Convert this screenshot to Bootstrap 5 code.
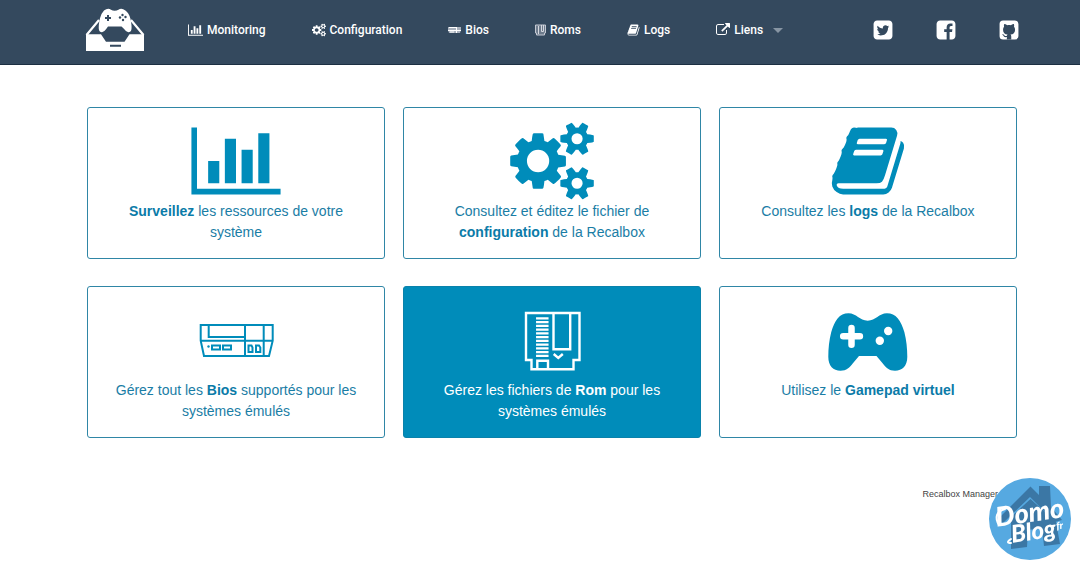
<!DOCTYPE html>
<html lang="fr">
<head>
<meta charset="utf-8">
<meta name="viewport" content="width=device-width, initial-scale=1">
<title>Recalbox Manager</title>
<link href="https://cdn.jsdelivr.net/npm/bootstrap@5.3.0/dist/css/bootstrap.min.css" rel="stylesheet">
<style>
  :root { --navy: #34495e; --brand: #008cba; --ink: #1a7da5; }
  body { font-family: "Liberation Sans", Arial, sans-serif; background: #fff; }
  .page-pad { padding-left: 87px; padding-right: 63px; }
  .topbar { background: var(--navy); border-bottom: 1px solid #1c2f42; min-height: 65px; }
  .topbar .page-pad { padding-right: 60px; }
  .topbar .nav-link { font: 500 12px/20px Roboto, sans-serif; color: #fff; }
  .topbar .main-links { gap: 46px; margin-left: 42px; }
  .topbar .social-links { gap: 41px; }
  .topbar svg { fill: currentColor; }
  .glyph { height: 14px; }
  .social-links svg { width: 22px; height: 22px; display: block; }
  .brand-logo { width: 62px; height: 48px; display: block; margin-left: -3px; }
  .dropdown-toggle::after { color: #8795a3; border-width: 5px; border-bottom: 0; margin-left: 6px; }
  .tiles-wrap { padding-top: 42px; }
  .tiles { --bs-gutter-x: 18px; --bs-gutter-y: 27px; }
  .tile { border: 1px solid #2f86a6; border-radius: 3px; color: var(--ink); min-height: 152px; padding: 14px 22px; font-size: 14px; line-height: 21px; text-decoration: none; text-align: center; }
  .tile svg { height: 78px; fill: var(--brand); display: block; margin: 0 auto 1px; }
  .tile strong { color: #0b7ba8; }
  .tile.current { background: var(--brand); border-color: #0a82ab; color: #fff; }
  .tile.current strong { color: #fff; }
  .tile .outline { fill: none; stroke: var(--brand); stroke-width: 2; }
  .tile.current .outline { stroke: #fff; stroke-width: 2.4; }
  .foot { font: 9px/12px "Liberation Sans", sans-serif; color: #444; padding-top: 50px; padding-right: 75px; }
  .sticker { position: fixed; right: 8px; bottom: 7px; width: 84px; height: 84px; }
  .sticker text { font-family: Lato, sans-serif; font-style: italic; font-weight: 900; fill: #fff; }
</style>
</head>
<body>
<svg width="0" height="0" class="position-absolute" aria-hidden="true">
  <symbol id="i-chart" viewBox="0 0 2048 1792"><path d="M640 896v512h-256v-512h256zm384-512v1024h-256v-1024h256zm1024 1152v128h-2048v-1536h128v1408h1920zm-640-896v768h-256v-768h256zm384-384v1152h-256v-1152h256z"/></symbol>
  <symbol id="i-cogs" viewBox="0 0 1920 1792"><path d="M896 896q0-106-75-181t-181-75-181 75-75 181 75 181 181 75 181-75 75-181zm768 512q0-52-38-90t-90-38-90 38-38 90q0 53 37.5 90.5t90.5 37.5 90.5-37.5 37.5-90.5zm0-1024q0-52-38-90t-90-38-90 38-38 90q0 53 37.5 90.5t90.5 37.5 90.5-37.5 37.5-90.5zm-384 421v185q0 10-7 19.5t-16 10.5l-155 24q-11 35-32 76 34 48 90 115 7 11 7 20 0 12-7 19-23 30-82.5 89.5t-78.5 59.5q-11 0-21-7l-115-90q-37 19-77 31-11 108-23 155-7 24-30 24h-186q-11 0-20-7.5t-10-17.5l-23-153q-34-10-75-31l-118 89q-7 7-20 7-11 0-21-8-144-133-144-160 0-9 7-19 10-14 41-53t47-61q-23-44-35-82l-152-24q-10-1-17-9.5t-7-19.5v-185q0-10 7-19.5t16-10.5l155-24q11-35 32-76-34-48-90-115-7-11-7-20 0-12 7-20 22-30 82-89t79-59q11 0 21 7l115 90q34-18 77-32 11-108 23-154 7-24 30-24h186q11 0 20 7.5t10 17.5l23 153q34 10 75 31l118-89q8-7 20-7 11 0 21 8 144 133 144 160 0 8-7 19-12 16-42 54t-45 60q23 48 34 82l152 23q10 2 17 10.5t7 19.5zm640 533v140q0 16-149 31-12 27-30 52 51 113 51 138 0 4-4 7-122 71-124 71-8 0-46-47t-52-68q-20 2-30 2t-30-2q-14 21-52 68t-46 47q-2 0-124-71-4-3-4-7 0-25 51-138-18-25-30-52-149-15-149-31v-140q0-16 149-31 13-29 30-52-51-113-51-138 0-4 4-7 4-2 35-20t59-34 30-16q8 0 46 46.5t52 67.5q20-2 30-2t30 2q51-71 92-112l6-2q4 0 124 70 4 3 4 7 0 25-51 138 17 23 30 52 149 15 149 31zm0-1024v140q0 16-149 31-12 27-30 52 51 113 51 138 0 4-4 7-122 71-124 71-8 0-46-47t-52-68q-20 2-30 2t-30-2q-14 21-52 68t-46 47q-2 0-124-71-4-3-4-7 0-25 51-138-18-25-30-52-149-15-149-31v-140q0-16 149-31 13-29 30-52-51-113-51-138 0-4 4-7 4-2 35-20t59-34 30-16q8 0 46 46.5t52 67.5q20-2 30-2t30 2q51-71 92-112l6-2q4 0 124 70 4 3 4 7 0 25-51 138 17 23 30 52 149 15 149 31z"/></symbol>
  <symbol id="i-book" viewBox="0 0 1792 1792"><path d="M1703 478q40 57 18 129l-275 906q-19 64-76.5 107.5t-122.5 43.5h-923q-77 0-148.5-53.5t-99.5-131.5q-24-67-2-127 0-4 3-27t4-37q1-8-3-21.5t-3-19.5q2-11 8-21t16.5-23.5 16.5-23.5q23-38 45-91.5t30-91.5q3-10 .5-30t-.5-28q3-11 17-28t17-23q21-36 42-92t25-90q1-9-2.5-32t.5-28q4-13 22-30.5t22-22.5q19-26 42.5-84.5t27.5-96.5q1-8-3-25.5t-2-26.5q2-8 9-18t18-23 17-21q8-12 16.5-30.5t15-35 16-36 19.5-32 26.5-23.5 36-11.5 47.5 5.5l-1 3q38-9 51-9h761q74 0 114 56t18 130l-274 906q-36 119-71.5 153.5t-128.5 34.5h-869q-27 0-38 15-11 16-1 43 24 70 144 70h923q29 0 56-15.5t35-41.5l300-987q7-22 5-57 38 15 59 43zm-1064 2q-4 13 2 22.5t20 9.5h608q13 0 25.5-9.5t16.5-22.5l21-64q4-13-2-22.5t-20-9.5h-608q-13 0-25.5 9.5t-16.5 22.5zm-83 256q-4 13 2 22.5t20 9.5h608q13 0 25.5-9.5t16.5-22.5l21-64q4-13-2-22.5t-20-9.5h-608q-13 0-25.5 9.5t-16.5 22.5z"/></symbol>
</svg>

<nav class="topbar navbar navbar-expand p-0 pb-1" aria-label="Navigation principale">
  <div class="page-pad d-flex align-items-center w-100">
    <a href="#" aria-label="Accueil" class="text-white">
      <svg class="brand-logo" viewBox="0 0 62 48">
        <path d="M2 28.300h15l5 7.400h18.500l5-7.400H60V45H2z"/>
        <path d="M2.500 29 15 14M59.500 29 47 14" fill="none" stroke="#fff" stroke-width="2.200"/>
        <path d="M20 4.500q4-3 7-.7 1.500 1 3.700 1t3.700-1q3-2.300 7 .7 3.500 2.500 5 8 1.500 7 1.100 10.500-.5 3.200-3.200 3.200-2 0-4.200-3.200L37.500 20.500H24L22.200 23q-2.200 3.200-4.200 3.200-2.700 0-3.200-3.200-.4-3.500 1.100-10.500 1.500-5.500 4.100-8z"/>
        <path d="M24 9v6M21 12h6M26 39.700h11" stroke="#34495e" stroke-width="2"/>
        <g fill="#34495e"><circle cx="38.500" cy="9" r="1.200"/><circle cx="41.500" cy="11" r="1.200"/><circle cx="36" cy="11.500" r="1.200"/><circle cx="39" cy="14" r="1.200"/></g>
      </svg>
    </a>
    <ul class="main-links navbar-nav">
      <li class="nav-item"><a class="nav-link p-0 d-flex align-items-center gap-1" href="#"><svg class="glyph" width="15" viewBox="0 0 2048 1792"><use href="#i-chart"/></svg>Monitoring</a></li>
      <li class="nav-item"><a class="nav-link p-0 d-flex align-items-center gap-1" href="#"><svg class="glyph" width="14" viewBox="0 0 1920 1792"><use href="#i-cogs"/></svg>Configuration</a></li>
      <li class="nav-item"><a class="nav-link p-0 d-flex align-items-center gap-1" href="#"><svg class="glyph" width="13" viewBox="0 0 13 14"><path d="M0 4h13v3l-1 3H1L0 7z" fill="#a9b1bd"/><path d="M1 4.500h7M0 7.500h13M8.500 4v6M2 9h4" stroke="#fff" fill="none"/></svg>Bios</a></li>
      <li class="nav-item"><a class="nav-link p-0 d-flex align-items-center gap-1" href="#"><svg class="glyph" width="11" viewBox="0 0 11 14"><path d="M.5 2h10v8h-1v2h-8v-2h-1z" fill="#6d7b8c" stroke="#c3c8d2"/><path d="M3.500 3v8M6.500 2v6.500h2V2" fill="none" stroke="#d5d8df"/></svg>Roms</a></li>
      <li class="nav-item"><a class="nav-link p-0 d-flex align-items-center gap-1" href="#"><svg class="glyph" width="13" viewBox="0 0 1792 1792"><use href="#i-book"/></svg>Logs</a></li>
      <li class="nav-item dropdown"><a class="nav-link p-0 dropdown-toggle d-flex align-items-center gap-1" href="#" role="button" data-bs-toggle="dropdown" aria-expanded="false"><svg class="glyph" width="14" viewBox="0 0 1792 1792"><path d="M1408 928v320q0 119-84.5 203.5t-203.5 84.5h-832q-119 0-203.5-84.5t-84.5-203.5v-832q0-119 84.5-203.5t203.5-84.5h704q14 0 23 9t9 23v64q0 14-9 23t-23 9h-704q-66 0-113 47t-47 113v832q0 66 47 113t113 47h832q66 0 113-47t47-113v-320q0-14 9-23t23-9h64q14 0 23 9t9 23zm384-864v512q0 26-19 45t-45 19-45-19l-176-176-652 652q-10 10-23 10t-23-10l-114-114q-10-10-10-23t10-23l652-652-176-176q-19-19-19-45t19-45 45-19h512q26 0 45 19t19 45z"/></svg>Liens</a></li>
    </ul>
    <div class="social-links d-flex ms-auto text-white">
      <a href="#" class="text-white" aria-label="Twitter"><svg viewBox="0 0 1792 1792"><path d="M1408 610q-56 25-121 34 68-40 93-117-65 38-134 51-61-66-153-66-87 0-148.5 61.5t-61.500 148.500q0 29 5 48-129-7-242-65t-192-155q-29 50-29 106 0 114 91 175-47-1-100-26v2q0 75 50 133.500t123 72.500q-29 8-51 8-13 0-39-4 21 63 74.500 104t121.500 42q-116 90-261 90-26 0-50-3 148 94 322 94 112 0 210-35.500t168-95 120.500-137 75-162 24.500-168.500q0-18-1-27 63-45 105-109zm256-194v960q0 119-84.500 203.500t-203.500 84.500h-960q-119 0-203.500-84.500t-84.500-203.500v-960q0-119 84.500-203.500t203.500-84.500h960q119 0 203.500 84.500t84.500 203.500z"/></svg></a>
      <a href="#" class="text-white" aria-label="Facebook"><svg viewBox="0 0 1792 1792"><path d="M1376 128q119 0 203.500 84.500t84.500 203.500v960q0 119-84.500 203.500t-203.500 84.500h-188v-595h199l30-232h-229v-148q0-56 23.500-84t91.500-28l122-1v-207q-63-9-178-9-136 0-217.500 80t-81.500 226v171h-200v232h200v595h-532q-119 0-203.500-84.500t-84.500-203.500v-960q0-119 84.500-203.500t203.500-84.500h960z"/></svg></a>
      <a href="#" class="text-white" aria-label="GitHub"><svg viewBox="0 0 1792 1792"><rect x="128" y="128" width="1536" height="1536" rx="288"/><path fill="#34495e" d="M720 1664v-190c-190 40-250-50-290-130-30-50-70-60-90-90 90-40 150 40 190 90 50 60 120 60 195 30 10-50 30-80 55-105-230-30-370-140-370-400 0-100 30-180 85-245-20-60-20-140 15-224 90 0 180 60 235 100 100-25 210-25 310 0 55-40 145-100 235-100 35 84 35 164 15 224 55 65 85 145 85 245 0 260-140 370-370 400 35 30 60 90 60 160v235z"/></svg></a>
    </div>
  </div>
</nav>

<main class="page-pad">
  <div class="tiles-wrap">
    <div class="row tiles">
      <div class="col-4 d-flex"><a href="#" class="tile w-100"><svg width="90"><use href="#i-chart"/></svg><strong>Surveillez</strong> les ressources de votre système</a></div>
      <div class="col-4 d-flex"><a href="#" class="tile w-100"><svg width="84"><use href="#i-cogs"/></svg>Consultez et éditez le fichier de <strong>configuration</strong> de la Recalbox</a></div>
      <div class="col-4 d-flex"><a href="#" class="tile w-100"><svg width="78"><use href="#i-book"/></svg>Consultez les <strong>logs</strong> de la Recalbox</a></div>
      <div class="col-4 d-flex"><a href="#" class="tile w-100">
        <svg width="90" viewBox="0 0 90 78"><g class="outline"><path d="M9.700 24h72v15.700L78 55H13L9.700 39.700zM9.700 39.700h72M17.700 24v12H54M54 24v31M72.700 24v31"/><path d="M21 44.500h8v4h-8zM32 44.500h8v4h-8zM57.500 44.500h3l1 2v4.500h-4zM65 44.500h3l1.300 2v4.500H65z"/></g><circle cx="17.500" cy="45.500" r="1.200"/></svg>Gérez tout les <strong>Bios</strong> supportés pour les systèmes émulés</a></div>
      <div class="col-4 d-flex"><a href="#" class="tile current w-100">
        <svg width="78" viewBox="0 0 78 78"><g class="outline"><path d="M13 12h53.500v47h-6v9.300H18.500V59H13zM40.500 12v36.300H57.200V12M24.300 68.300v-8.600H35v8.600M40.700 53l4.600 4 4.500-4"/><path d="M29.300 16.200v40" stroke-width="12.500" stroke-dasharray="2.400 1.350"/></g></svg>Gérez les fichiers de <strong>Rom</strong> pour les systèmes émulés</a></div>
      <div class="col-4 d-flex"><a href="#" class="tile w-100">
        <svg width="84" viewBox="0 0 84 78"><path d="M22.500 12.300c8 0 11 7.400 19.200 7.400s11.200-7.400 19.200-7.400c9 0 14 7 17.500 19 2 8 2.900 16 2.900 24.400 0 9-5 14-12.300 14-6 0-9.500-3.500-12-7L50.500 55H33l-6.500 7.700c-2.500 3.500-6 7-12 7-7.300 0-12.200-5-12.200-14 0-8.400.9-16.400 2.900-24.400 3.500-12 8.300-19 17.300-19z"/><path d="M25.500 27v16.700M17.200 35.300h16.700" stroke="#fff" stroke-width="6.500" stroke-linecap="round"/><g fill="#fff"><circle cx="62.200" cy="30" r="4.200"/><circle cx="53.800" cy="39.700" r="4.200"/></g></svg>Utilisez le <strong>Gamepad virtuel</strong></a></div>
    </div>
  </div>
</main>

<footer class="foot text-end">Recalbox Manager v</footer>

<svg class="sticker" viewBox="0 0 84 84" role="img" aria-label="Domo Blog">
  <circle cx="42" cy="42" r="41" fill="#56a9e1"/>
  <g fill="#3b77a5"><path d="M9 43 42.500 9.500 51 18V9h11l1 21 11 13-7 2-25-25-27 26z"/><path d="M23 40 42.500 22 68 45l4 22-16 2-2-18-14 2-1 17-16 2z"/></g>
  <g transform="rotate(-8 42 42)"><text x="8" y="45" font-size="27">Domo</text><text x="21" y="63" font-size="24">Blog</text><text x="67" y="56" font-size="10">fr</text></g>
  <path d="M11 48q-7-12 6-16M23 62q-6 4 0 4" fill="none" stroke="#fff" stroke-width="2" stroke-linecap="round"/>
</svg>
<script src="https://cdn.jsdelivr.net/npm/bootstrap@5.3.0/dist/js/bootstrap.bundle.min.js"></script>
</body>
</html>
